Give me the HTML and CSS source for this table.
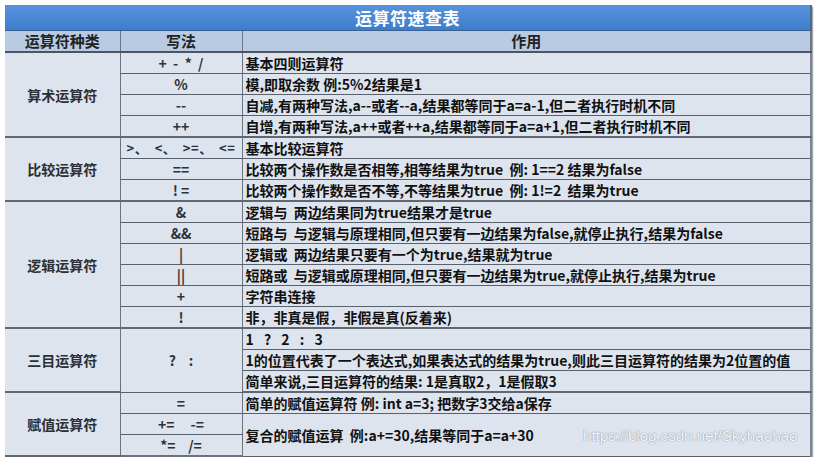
FILE: index.html
```html
<!DOCTYPE html>
<html lang="zh">
<head>
<meta charset="utf-8">
<link rel="stylesheet" href="styles.css">
</head>
<body>
<div class="sheet">
<table class="ops">
  <colgroup><col class="c1"><col class="c2"><col class="c3"></colgroup>
  <thead>
    <tr class="title"><th colspan="3">运算符速查表</th></tr>
    <tr class="head"><th>运算符种类</th><th>写法</th><th>作用</th></tr>
  </thead>
  <tbody>
    <tr><td class="kind" rowspan="4">算术运算符</td><td class="op">+&nbsp; -&nbsp; *&nbsp; /</td><td class="desc">基本四则运算符</td></tr>
    <tr><td class="op">%</td><td class="desc">模,即取余数 例:5%2结果是1</td></tr>
    <tr><td class="op">--</td><td class="desc">自减,有两种写法,a--或者--a,结果都等同于a=a-1,但二者执行时机不同</td></tr>
    <tr class="end"><td class="op">++</td><td class="desc">自增,有两种写法,a++或者++a,结果都等同于a=a+1,但二者执行时机不同</td></tr>

    <tr><td class="kind" rowspan="3">比较运算符</td><td class="op wide">&gt;、 &lt;、 &gt;=、 &lt;=</td><td class="desc">基本比较运算符</td></tr>
    <tr><td class="op">==</td><td class="desc">比较两个操作数是否相等,相等结果为true&nbsp; 例: 1==2 结果为false</td></tr>
    <tr class="end"><td class="op">! =</td><td class="desc">比较两个操作数是否不等,不等结果为true&nbsp; 例: 1!=2&nbsp; 结果为true</td></tr>

    <tr><td class="kind" rowspan="6">逻辑运算符</td><td class="op">&amp;</td><td class="desc">逻辑与&nbsp; 两边结果同为true结果才是true</td></tr>
    <tr><td class="op">&amp;&amp;</td><td class="desc">短路与&nbsp; 与逻辑与原理相同,但只要有一边结果为false,就停止执行,结果为false</td></tr>
    <tr><td class="op">|</td><td class="desc">逻辑或&nbsp; 两边结果只要有一个为true,结果就为true</td></tr>
    <tr><td class="op">||</td><td class="desc">短路或&nbsp; 与逻辑或原理相同,但只要有一边结果为true,就停止执行,结果为true</td></tr>
    <tr><td class="op">+</td><td class="desc">字符串连接</td></tr>
    <tr class="end"><td class="op">!</td><td class="desc">非，非真是假，非假是真(反着来)</td></tr>

    <tr><td class="kind" rowspan="3">三目运算符</td><td class="op" rowspan="3">?&nbsp;&nbsp;&nbsp; :</td><td class="desc spaced">1 ? 2 : 3</td></tr>
    <tr><td class="desc">1的位置代表了一个表达式,如果表达式的结果为true,则此三目运算符的结果为2位置的值</td></tr>
    <tr class="end"><td class="desc">简单来说,三目运算符的结果: 1是真取2，1是假取3</td></tr>

    <tr><td class="kind" rowspan="3">赋值运算符</td><td class="op">=</td><td class="desc">简单的赋值运算符 例: int a=3; 把数字3交给a保存</td></tr>
    <tr><td class="op">+=&nbsp;&nbsp;&nbsp;&nbsp; -=</td><td class="desc" rowspan="2">复合的赋值运算&nbsp; 例:a+=30,结果等同于a=a+30</td></tr>
    <tr class="last"><td class="op">*=&nbsp;&nbsp;&nbsp; /=</td></tr>
  </tbody>
</table>
<div class="watermark">https://blog.csdn.net/Skyhaohao</div>
</div>
</body>
</html>
```

FILE: styles.css
```css
html, body {
  margin: 0;
  padding: 0;
  background: #ffffff;
}

.sheet {
  position: relative;
  width: 806px;
  padding: 5px 0 0 5px;
}

.ops {
  width: 806px;
  table-layout: fixed;
  border-collapse: collapse;
  font-family: "Noto Sans CJK SC", sans-serif;
  font-weight: 700;
  color: #1a1a1a;
  box-shadow: 1px 2px 1px rgba(90, 96, 106, 0.55);
}

.c1 { width: 115px; }
.c2 { width: 122px; }
.c3 { width: 569px; }

.title th {
  height: 25px;
  padding: 0;
  background: linear-gradient(#5892dc, #3f7ccb);
  color: #ffffff;
  font-size: 17px;
  line-height: 25px;
  font-weight: 700;
  letter-spacing: 0.5px;
  text-align: center;
  border-bottom: 1px solid #3a5f90;
  border-right: 2px solid #4e6a8e;
}

.head th {
  height: 20px;
  padding: 0;
  background: #b8cbe3;
  font-size: 15px;
  line-height: 20px;
  font-weight: 700;
  color: #222;
  text-align: center;
  border-right: 1px solid #6c7684;
  border-bottom: 2px solid #4d5562;
}

.head th:last-child { border-right: 2px solid #6c7684; }

td {
  height: 20px;
  padding: 0;
  background: #dde4ee;
  font-size: 14px;
  line-height: 20px;
  border-right: 1px solid #6a7380;
  border-bottom: 1px solid #59616d;
  white-space: nowrap;
  overflow: hidden;
}

td.desc {
  padding-left: 3px;
  border-right: 2px solid #7c8592;
  color: #111;
}

td.kind {
  text-align: center;
  font-size: 14px;
  font-weight: 700;
  color: #2b2f36;
  border-bottom: 2px solid #5f6773;
}

td.op {
  text-align: center;
  color: #2e3238;
  font-size: 14px;
}

td.op.wide { font-size: 13px; letter-spacing: 0.5px; word-spacing: 3px; }

td.desc.spaced { word-spacing: 7px; }

tr.end td { height: 19px; border-bottom: 2px solid #5f6773; }

tr.last td { height: 19px; border-bottom: 2px solid #6a7380; }

.watermark {
  position: absolute;
  left: 583px;
  top: 427px;
  font-family: "Liberation Sans", Arial, sans-serif;
  font-size: 15.5px;
  color: #f4f6fa;
  text-shadow: 0 0 1px #8a929e, 0 0 1px #8a929e;
  letter-spacing: -0.2px;
}
```
